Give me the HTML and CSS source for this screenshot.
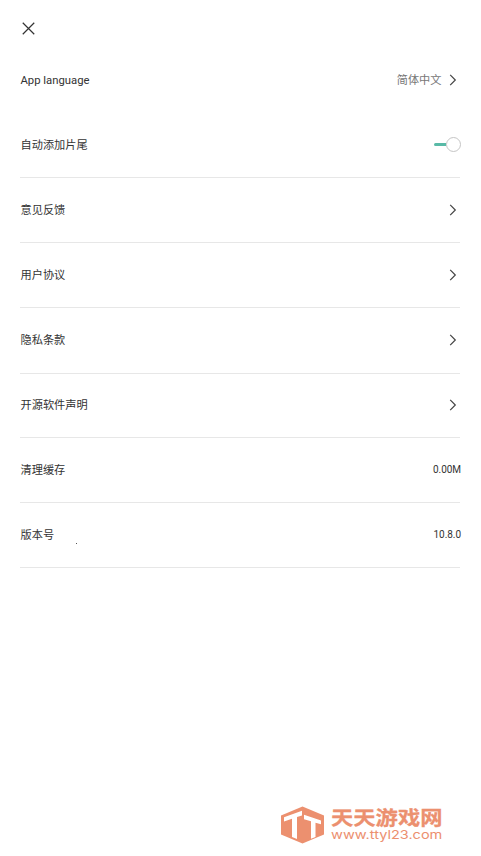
FILE: index.html
```html
<!DOCTYPE html>
<html lang="zh-CN">
<head>
<meta charset="utf-8">
<title>App language</title>
<link rel="stylesheet" href="styles.css">
</head>
<body>
<svg class="defs" width="0" height="0"><symbol id="chevron" viewBox="0 0 8 12"><path d="M1.2 .9 6.3 6l-5.1 5.1"/></symbol></svg>
<header class="header">
  <svg class="close" viewBox="0 0 12 12"><path d="M.7.7l10.6 10.6M11.3.7.7 11.3"/></svg>
</header>
<main class="settings">
  <div class="row language"><span class="latin">App language</span><span class="choice">简体中文</span><svg class="chevron"><use href="#chevron"/></svg></div>
  <div class="row"><span>自动添加片尾</span><span class="switch"><i class="track"></i><i class="knob"></i></span></div>
  <div class="row"><span>意见反馈</span><svg class="chevron"><use href="#chevron"/></svg></div>
  <div class="row"><span>用户协议</span><svg class="chevron"><use href="#chevron"/></svg></div>
  <div class="row tall"><span>隐私条款</span><svg class="chevron"><use href="#chevron"/></svg></div>
  <div class="row short"><span>开源软件声明</span><svg class="chevron"><use href="#chevron"/></svg></div>
  <div class="row"><span>清理缓存</span><span class="value">0.00M</span></div>
  <div class="row"><span>版本号</span><i class="dot"></i><span class="value">10.8.0</span></div>
</main>
<footer class="brand">
  <svg class="logo" viewBox="0 0 44 38">
    <path class="fill" d="M22.5 .5 44 9.5v19L22.5 37.5 1 28.5v-19Z"/>
    <path class="cut" d="M4 11.3 22 4.8v4.6l-5 1.5V33l-5-2V12.8L4 15.4ZM24 8.8 41 14.5v3.8l-5.5-1.5V31l-4.5 1.8V15.3l-7-2.1Z"/>
  </svg>
  <div class="brand-text"><div class="brand-name">天天游戏网</div><div class="brand-url">www.ttyl23.com</div></div>
</footer>
</body>
</html>
```
FILE: styles.css
```css
* { box-sizing: border-box; }
body {
  margin: 0;
  height: 856px;
  display: flex;
  flex-direction: column;
  overflow: hidden;
  background: #fff;
  color: #333;
  font: 11.2px/16px Roboto, "Noto Sans CJK SC", sans-serif;
}
.defs { position: absolute; }
.header { height: 48px; padding: 22px 22px 0; }
.close { display: block; width: 13px; height: 13px; fill: none; stroke: #333; stroke-width: 1.1; }
.settings { padding: 0 21px 0 20px; }
.row {
  display: flex;
  align-items: center;
  height: 65px;
  padding-left: .5px;
  border-bottom: 1px solid #e7e7e7;
}
.row > span:first-child { padding-top: 1px; }
.language { height: 65px; border: 0; align-items: flex-start; padding-top: 24px; }
.tall { height: 66px; }
.short { height: 64px; }
.row > .latin:first-child { font-size: 11.3px; }
.choice { margin-left: auto; padding-top: 1px; color: #777; }
.chevron { width: 8px; height: 12px; margin: 0 3px 1px auto; fill: none; stroke: #444; stroke-width: 1.2; }
.choice + .chevron { margin: 2px 3px 0 7.5px; }
.value { margin: 0 -1px 0 auto; font-size: 10px; letter-spacing: -.05px; }
.switch { display: flex; align-items: center; margin: 0 0 2px auto; }
.track { width: 12px; height: 3px; border-radius: 2px 0 0 2px; background: #59baa7; }
.knob { width: 15px; height: 15px; border: 1px solid #c5c5c5; border-radius: 50%; background: #fff; margin-right: -1px; }
.dot { width: 1px; height: 1px; margin: 17px 0 0 22px; background: #555; }
.brand { display: flex; margin: auto 0 11px 280px; height: 39px; color: #ec906f; }
.logo { width: 44px; height: 38px; }
.fill { fill: #ec906f; }
.cut { fill: #fff; }
.brand-text { margin-left: 7px; white-space: nowrap; }
.brand-name { height: 22px; font: 700 22.3px/21px "Noto Sans CJK SC", sans-serif; -webkit-text-stroke: .3px #ec906f; transform: scaleY(.88); }
.brand-url { width: 111px; font: 400 12px/14px Inter, sans-serif; transform: scaleX(1.21); transform-origin: left; }
```
